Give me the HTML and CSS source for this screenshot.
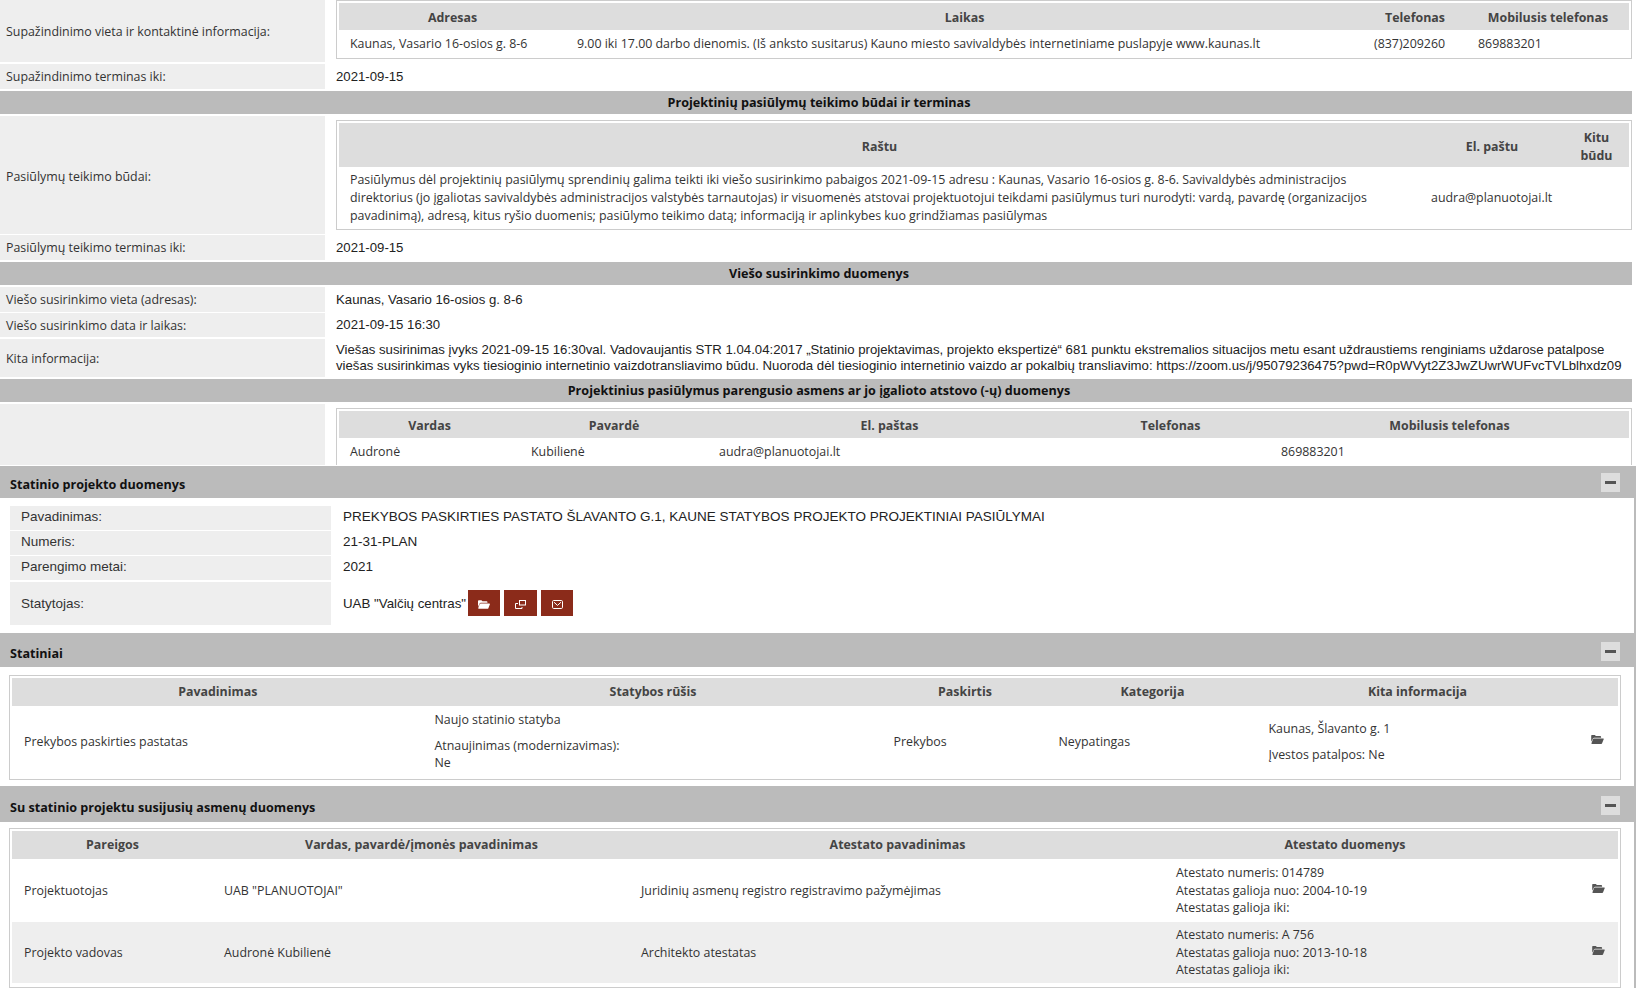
FILE: index.html
```html
<!DOCTYPE html>
<html lang="lt">
<head>
<meta charset="utf-8">
<title>Projektiniai pasiūlymai</title>
<link rel="stylesheet" href="styles.css">
</head>
<body>
<svg class="defs" width="0" height="0" aria-hidden="true">
  <symbol id="folder" viewBox="0 0 14 10">
    <path fill="currentColor" d="M0 1C0 .5.4 0 1 0h3l1.2 1.2H10c.6 0 1 .4 1 1V3H3.2c-.6 0-1 .3-1.3.8L0 7.6zM3 3.8h10.2c.6 0 .9.5.7 1l-1.8 4.5c-.2.4-.5.7-.9.7H.8c-.5 0-.7-.4-.5-.8L2 4.5c.2-.4.6-.7 1-.7z"/>
  </symbol>
</svg>
<section class="kv">
  <div class="row r-contact">
    <div class="label">Supažindinimo vieta ir kontaktinė informacija:</div>
    <div class="value">
      <table class="inner t-contact">
        <colgroup><col class="c1"><col class="c2"><col class="c3"><col class="c4"></colgroup>
        <tr><th>Adresas</th><th>Laikas</th><th>Telefonas</th><th>Mobilusis telefonas</th></tr>
        <tr><td>Kaunas, Vasario 16-osios g. 8-6</td><td>9.00 iki 17.00 darbo dienomis. (Iš anksto susitarus) Kauno miesto savivaldybės internetiniame puslapyje www.kaunas.lt</td><td>(837)209260</td><td>869883201</td></tr>
      </table>
    </div>
  </div>
  <div class="row r-date">
    <div class="label">Supažindinimo terminas iki:</div>
    <div class="value plain">2021-09-15</div>
  </div>
  <h2 class="band">Projektinių pasiūlymų teikimo būdai ir terminas</h2>
  <div class="row r-ways tight">
    <div class="label">Pasiūlymų teikimo būdai:</div>
    <div class="value">
      <table class="inner t-ways">
        <colgroup><col class="c1"><col class="c2"><col class="c3"></colgroup>
        <tr><th>Raštu</th><th>El. paštu</th><th>Kitu būdu</th></tr>
        <tr><td>Pasiūlymus dėl projektinių pasiūlymų sprendinių galima teikti iki viešo susirinkimo pabaigos 2021-09-15 adresu : Kaunas, Vasario 16-osios g. 8-6. Savivaldybės administracijos direktorius (jo įgaliotas savivaldybės administracijos valstybės tarnautojas) ir visuomenės atstovai projektuotojui teikdami pasiūlymus turi nurodyti: vardą, pavardę (organizacijos pavadinimą), adresą, kitus ryšio duomenis; pasiūlymo teikimo datą; informaciją ir aplinkybes kuo grindžiamas pasiūlymas</td><td>audra@planuotojai.lt</td><td></td></tr>
      </table>
    </div>
  </div>
  <div class="row r-date">
    <div class="label">Pasiūlymų teikimo terminas iki:</div>
    <div class="value plain">2021-09-15</div>
  </div>
  <h2 class="band">Viešo susirinkimo duomenys</h2>
  <div class="row r-date tight">
    <div class="label">Viešo susirinkimo vieta (adresas):</div>
    <div class="value plain">Kaunas, Vasario 16-osios g. 8-6</div>
  </div>
  <div class="row r-date short">
    <div class="label">Viešo susirinkimo data ir laikas:</div>
    <div class="value plain">2021-09-15 16:30</div>
  </div>
  <div class="row r-other">
    <div class="label">Kita informacija:</div>
    <div class="value plain">Viešas susirinimas įvyks 2021-09-15 16:30val. Vadovaujantis STR 1.04.04:2017 „Statinio projektavimas, projekto ekspertizė“ 681 punktu ekstremalios situacijos metu esant uždraustiems renginiams uždarose patalpose viešas susirinkimas vyks tiesioginio internetinio vaizdotransliavimo būdu. Nuoroda dėl tiesioginio internetinio vaizdo ar pokalbių transliavimo: https://zoom.us/j/95079236475?pwd=R0pWVyt2Z3JwZUwrWUFvcTVLblhxdz09</div>
  </div>
  <h2 class="band">Projektinius pasiūlymus parengusio asmens ar jo įgalioto atstovo (-ų) duomenys</h2>
  <div class="row r-person">
    <div class="label"></div>
    <div class="value">
      <table class="inner t-person">
        <colgroup><col class="c1"><col class="c2"><col class="c3"><col class="c4"><col class="c5"></colgroup>
        <tr><th>Vardas</th><th>Pavardė</th><th>El. paštas</th><th>Telefonas</th><th>Mobilusis telefonas</th></tr>
        <tr><td>Audronė</td><td>Kubilienė</td><td>audra@planuotojai.lt</td><td></td><td>869883201</td></tr>
      </table>
    </div>
  </div>
</section>

<section class="panel">
  <header class="panel-head head-project"><h3>Statinio projekto duomenys</h3><button class="toggle" type="button" aria-label="Suskleisti"><span></span></button></header>
  <div class="panel-body project">
    <div class="prow"><div class="plabel">Pavadinimas:</div><div class="pvalue">PREKYBOS PASKIRTIES PASTATO ŠLAVANTO G.1, KAUNE STATYBOS PROJEKTO PROJEKTINIAI PASIŪLYMAI</div></div>
    <div class="prow"><div class="plabel">Numeris:</div><div class="pvalue">21-31-PLAN</div></div>
    <div class="prow"><div class="plabel">Parengimo metai:</div><div class="pvalue">2021</div></div>
    <div class="prow tall"><div class="plabel">Statytojas:</div>
      <div class="pvalue actions"><span>UAB "Valčių centras"</span>
        <button class="act" type="button" aria-label="Atidaryti"><svg width="12" height="9"><use href="#folder"/></svg></button>
        <button class="act wide" type="button" aria-label="Langas"><svg width="11" height="9" viewBox="0 0 11 9" fill="none" stroke="currentColor" stroke-width="1"><rect x="4.5" y=".5" width="6" height="4.5"/><path d="M3 3.5H.5v5H7V7"/></svg></button>
        <button class="act" type="button" aria-label="Laiškas"><svg width="11" height="9" viewBox="0 0 11 9" fill="none" stroke="currentColor" stroke-width="1"><rect x=".5" y=".5" width="10" height="8" rx="1.2"/><path d="M2 2.2 5.5 5.4 9 2.2"/></svg></button>
      </div>
    </div>
  </div>
</section>

<section class="panel">
  <header class="panel-head head-build"><h3>Statiniai</h3><button class="toggle" type="button" aria-label="Suskleisti"><span></span></button></header>
  <div class="panel-body body-build">
    <table class="inner t-build">
      <colgroup><col class="c1"><col class="c2"><col class="c3"><col class="c4"><col class="c5"><col class="c6"></colgroup>
      <tr><th>Pavadinimas</th><th>Statybos rūšis</th><th>Paskirtis</th><th>Kategorija</th><th>Kita informacija</th><th></th></tr>
      <tr>
        <td>Prekybos paskirties pastatas</td>
        <td><p>Naujo statinio statyba</p><p class="last">Atnaujinimas (modernizavimas):<br>Ne</p></td>
        <td>Prekybos</td>
        <td>Neypatingas</td>
        <td><p>Kaunas, Šlavanto g. 1</p><p class="last">Įvestos patalpos: Ne</p></td>
        <td class="icon"><svg width="13" height="9"><use href="#folder"/></svg></td>
      </tr>
    </table>
  </div>
</section>

<section class="panel">
  <header class="panel-head head-people"><h3>Su statinio projektu susijusių asmenų duomenys</h3><button class="toggle" type="button" aria-label="Suskleisti"><span></span></button></header>
  <div class="panel-body body-people">
    <table class="inner t-people">
      <colgroup><col class="c1"><col class="c2"><col class="c3"><col class="c4"><col class="c5"></colgroup>
      <tr><th>Pareigos</th><th>Vardas, pavardė/įmonės pavadinimas</th><th>Atestato pavadinimas</th><th>Atestato duomenys</th><th></th></tr>
      <tr>
        <td>Projektuotojas</td><td>UAB "PLANUOTOJAI"</td><td>Juridinių asmenų registro registravimo pažymėjimas</td>
        <td>Atestato numeris: 014789<br>Atestatas galioja nuo: 2004-10-19<br>Atestatas galioja iki:</td>
        <td class="icon"><svg width="13" height="9"><use href="#folder"/></svg></td>
      </tr>
      <tr class="alt">
        <td>Projekto vadovas</td><td>Audronė Kubilienė</td><td>Architekto atestatas</td>
        <td>Atestato numeris: A 756<br>Atestatas galioja nuo: 2013-10-18<br>Atestatas galioja iki:</td>
        <td class="icon"><svg width="13" height="9"><use href="#folder"/></svg></td>
      </tr>
    </table>
  </div>
</section>
</body>
</html>
```

FILE: styles.css
```css
* { box-sizing: border-box; }
html, body { margin: 0; padding: 0; background: #fff; height: 993px; overflow: hidden; }
body {
  font-family: "Open Sans", "Liberation Sans", sans-serif;
  font-size: 12.4px;
  color: #333;
}
.defs { position: absolute; }

/* upper key/value list */
.kv { width: 1632px; height: 466px; overflow: hidden; }
.row { display: grid; grid-template-columns: 325px 1fr; column-gap: 11px; margin-bottom: 2px; }
.row.tight { margin-bottom: 1px; }
.label { background: #eee; padding: 0 6px; display: flex; align-items: center; }
.plain { font-family: "Liberation Sans", sans-serif; font-size: 13.2px; display: flex; align-items: center; line-height: 15.6px; color: #222; }
.r-contact { height: 62px; }
.r-date { height: 25px; }
.r-date.short { height: 24px; }
.r-ways { height: 118px; }
.r-ways .label { padding-top: 2px; }
.r-ways .value, .r-person .value { padding-top: 4px; }
.r-other { height: 38px; }
.r-person { height: 61px; overflow: hidden; margin-bottom: 0; }
.value { min-width: 0; }

.band {
  margin: 0 0 2px;
  height: 23px;
  padding-left: 6px;
  background: #bbb;
  color: #111;
  font-size: 12.6px;
  font-weight: 700;
  line-height: 23px;
  text-align: center;
}

/* inner data tables */
.inner {
  width: 100%;
  table-layout: fixed;
  border: 1px solid #ccc;
  border-collapse: separate;
  border-spacing: 0;
  padding: 2px;
  background: #fff;
}
.inner th {
  background: #ddd;
  color: #444;
  font-weight: 700;
  height: 27px;
  padding: 0 11px;
  text-align: center;
  line-height: 17.7px;
}
.inner td { padding: 0 11px; line-height: 17.7px; height: 26px; }
.inner p { margin: 0 0 8px; }
.inner p.last { margin: 0; }
.inner .alt td { background: #eee; }
.inner .icon { padding: 0; text-align: center; color: #555; }
.inner .icon svg { display: inline-block; vertical-align: middle; margin-bottom: 5px; }

.t-contact th, .t-person th { padding-top: 2px; }
.t-contact td, .t-person td, .t-ways td { padding-top: 2px; }
.t-contact .c1 { width: 227px; }
.t-contact .c3 { width: 104px; }
.t-contact .c4 { width: 162px; }
.t-ways th { height: 44px; padding-top: 3px; }
.t-ways .c2 { width: 144px; }
.t-ways .c3 { width: 65px; }
.t-ways td { height: 60px; }
.t-person .c1 { width: 181px; }
.t-person .c2 { width: 188px; }
.t-person .c3 { width: 363px; }
.t-person .c4 { width: 199px; }

/* collapsible panels */
.panel { margin-right: 1px; }
.panel-head {
  background: #bbb;
  padding: 0 16px 0 10px;
  display: flex;
  align-items: center;
  justify-content: space-between;
}
.head-project { height: 32px; }
.head-build { height: 34px; padding-top: 3px; }
.head-people { height: 36px; padding-top: 2px; }
.panel-head h3 { margin: 4px 0 0; font-size: 12.6px; font-weight: 700; color: #111; }
.toggle {
  width: 19px;
  height: 19px;
  padding: 0;
  border: 0;
  background: #ddd;
  display: flex;
  align-items: center;
  justify-content: center;
}
.toggle span { display: block; width: 11px; height: 3px; background: #555; }
.panel-body { padding: 0 13px 0 9px; border-right: 2px solid #bbb; }
.body-build { padding-top: 8px; padding-bottom: 6px; }
.body-people { padding-top: 6px; }

.project { padding: 8px 0 8px 10px; display: flex; flex-direction: column; gap: 1px; }
.prow { display: grid; grid-template-columns: 321px 1fr; column-gap: 12px; height: 24px; font-family: "Liberation Sans", sans-serif; font-size: 13.5px; }
.prow.tall { height: 43px; margin-top: 1px; }
.plabel { background: #eee; padding: 0 11px 3px; display: flex; align-items: center; }
.prow.tall .plabel { padding-bottom: 0; }
.pvalue { display: flex; align-items: center; color: #222; padding-bottom: 4px; }
.actions { padding-bottom: 0; font-size: 13.3px; }
.act {
  width: 32px;
  height: 26px;
  margin: 0 0 1px 4px;
  padding: 3px 0 0;
  border: 0;
  background: #8b2b1a;
  color: #fff;
  display: inline-flex;
  align-items: center;
  justify-content: center;
}
.act:first-of-type { margin-left: 2px; }
.act.wide { width: 33px; }

.t-build th { height: 28px; }
.t-build td:first-child, .t-people td:first-child { padding-left: 12px; }
.t-build .c1 { width: 411.5px; }
.t-build .c2 { width: 459px; }
.t-build .c3 { width: 165px; }
.t-build .c4 { width: 210px; }
.t-build .c5 { width: 320px; }
.t-build td { height: 71px; }
.t-people { padding-bottom: 4px; }
.t-people th { height: 28px; }
.t-people .c1 { width: 201px; }
.t-people .c2 { width: 417px; }
.t-people .c3 { width: 535px; }
.t-people .c4 { width: 360px; }
.t-people td { height: 63px; }
.t-people .alt td { height: 61px; }
.t-people .icon { text-align: right; padding-right: 13px; }
```
